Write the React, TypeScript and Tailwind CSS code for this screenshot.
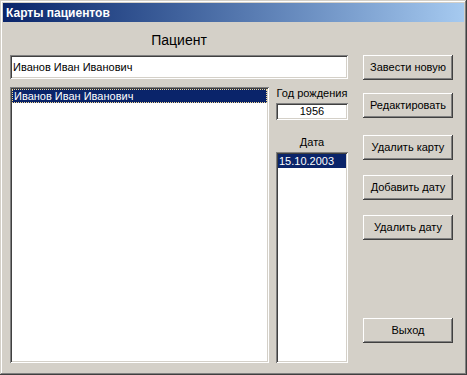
import React from "react";

// Win2000-style bevels
const sunken =
  "bg-white shadow-[inset_1px_1px_#808080,inset_-1px_-1px_#ffffff,inset_2px_2px_#404040,inset_-2px_-2px_#d4d0c8]";
const raised =
  "bg-[#d4d0c8] shadow-[inset_-1px_-1px_#404040,inset_1px_1px_#ffffff,inset_-2px_-2px_#808080,inset_2px_2px_#d4d0c8]";

const buttons = [
  { label: "Завести новую", mt: "mt-0" },
  { label: "Редактировать", mt: "mt-[13px]" },
  { label: "Удалить карту", mt: "mt-[17px]" },
  { label: "Добавить дату", mt: "mt-[15px]" },
  { label: "Удалить дату", mt: "mt-[15px]" },
  { label: "Выход", mt: "mt-[78px]" },
];

export default function App() {
  return (
    <div
      className="w-[467px] h-[375px] bg-[#d4d0c8] p-[3px] flex flex-col shadow-[inset_-1px_-1px_#404040,inset_1px_1px_#d4d0c8,inset_-2px_-2px_#808080,inset_2px_2px_#ffffff] text-black"
      style={{ fontFamily: '"Liberation Sans", Arial, sans-serif' }}
    >
      {/* Title bar */}
      <div className="h-[19px] shrink-0 bg-linear-to-r from-[#0a246a] to-[#a6caf0] flex items-center pl-[3px]">
        <span className="text-white font-bold text-[12px] leading-none">Карты пациентов</span>
      </div>

      {/* Client area */}
      <div className="flex flex-row pl-[7px]">
        {/* Left column */}
        <div className="w-[338px] flex flex-col">
          <div className="h-[33px] pt-[3px] flex items-center justify-center text-[14px]">Пациент</div>
          <div className={`${sunken} h-[24px] flex items-center px-[3px] text-[11px]`}>Иванов Иван Иванович</div>

          <div className="mt-[8px] h-[276px] flex flex-row">
            {/* Patients list */}
            <div className={`${sunken} w-[259px] p-[2px]`}>
              <div className="bg-[#0a246a] text-white text-[11px] leading-[14px] pl-[2px] outline-1 outline-dotted outline-[#f5db95] -outline-offset-1">
                Иванов Иван Иванович
              </div>
            </div>

            {/* Birth year + dates */}
            <div className="w-[72px] ml-[7px] flex flex-col">
              <div className="text-[11px] leading-[13px] text-center whitespace-nowrap">Год рождения</div>
              <div className={`${sunken} mt-[3px] h-[17px] flex items-center justify-center text-[11px]`}>1956</div>
              <div className="mt-[16px] text-[11px] leading-[13px] text-center">Дата</div>
              <div className={`${sunken} mt-[3px] flex-1 p-[2px]`}>
                <div className="bg-[#0a246a] text-white text-[11px] leading-[14px] pl-[1px]">15.10.2003</div>
              </div>
            </div>
          </div>
        </div>

        {/* Buttons */}
        <div className="w-[90px] ml-[15px] pt-[33px] flex flex-col">
          {buttons.map((b) => (
            <div
              key={b.label}
              className={`${raised} ${b.mt} h-[25px] flex items-center justify-center text-[11px]`}
            >
              {b.label}
            </div>
          ))}
        </div>
      </div>
    </div>
  );
}
